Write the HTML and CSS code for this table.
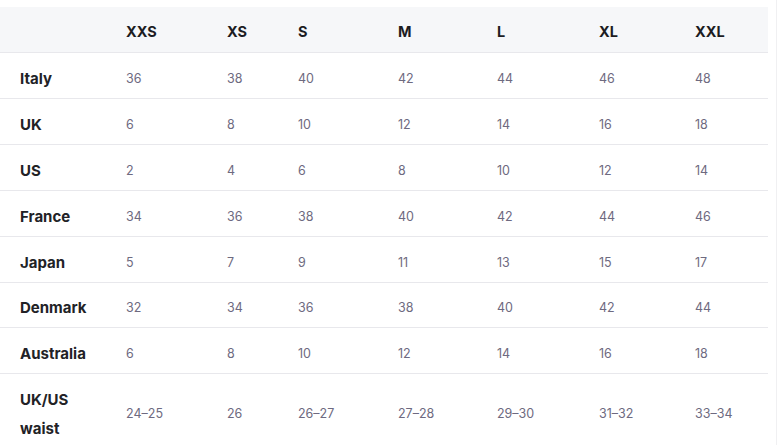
FILE: index.html
```html
<!DOCTYPE html>
<html>
<head>
<meta charset="utf-8">
<link rel="stylesheet" href="styles.css">
</head>
<body>
<div class="page">
  <div class="table">
    <div class="row head">
      <div class="cell"></div>
      <div class="cell">XXS</div>
      <div class="cell">XS</div>
      <div class="cell">S</div>
      <div class="cell">M</div>
      <div class="cell">L</div>
      <div class="cell">XL</div>
      <div class="cell">XXL</div>
    </div>
    <div class="row">
      <div class="cell label">Italy</div>
      <div class="cell">36</div><div class="cell">38</div><div class="cell">40</div><div class="cell">42</div><div class="cell">44</div><div class="cell">46</div><div class="cell">48</div>
    </div>
    <div class="row">
      <div class="cell label">UK</div>
      <div class="cell">6</div><div class="cell">8</div><div class="cell">10</div><div class="cell">12</div><div class="cell">14</div><div class="cell">16</div><div class="cell">18</div>
    </div>
    <div class="row">
      <div class="cell label">US</div>
      <div class="cell">2</div><div class="cell">4</div><div class="cell">6</div><div class="cell">8</div><div class="cell">10</div><div class="cell">12</div><div class="cell">14</div>
    </div>
    <div class="row">
      <div class="cell label">France</div>
      <div class="cell">34</div><div class="cell">36</div><div class="cell">38</div><div class="cell">40</div><div class="cell">42</div><div class="cell">44</div><div class="cell">46</div>
    </div>
    <div class="row">
      <div class="cell label">Japan</div>
      <div class="cell">5</div><div class="cell">7</div><div class="cell">9</div><div class="cell">11</div><div class="cell">13</div><div class="cell">15</div><div class="cell">17</div>
    </div>
    <div class="row">
      <div class="cell label">Denmark</div>
      <div class="cell">32</div><div class="cell">34</div><div class="cell">36</div><div class="cell">38</div><div class="cell">40</div><div class="cell">42</div><div class="cell">44</div>
    </div>
    <div class="row">
      <div class="cell label">Australia</div>
      <div class="cell">6</div><div class="cell">8</div><div class="cell">10</div><div class="cell">12</div><div class="cell">14</div><div class="cell">16</div><div class="cell">18</div>
    </div>
    <div class="row last">
      <div class="cell label">UK/US<br>waist</div>
      <div class="cell">24–25</div><div class="cell">26</div><div class="cell">26–27</div><div class="cell">27–28</div><div class="cell">29–30</div><div class="cell">31–32</div><div class="cell">33–34</div>
    </div>
  </div>
</div>
</body>
</html>
```
FILE: styles.css
```css
html, body {
  margin: 0;
  padding: 0;
  background: #fff;
}
.page {
  width: 776px;
  height: 438px;
  border-right: 1px solid #f0f0f2;
  padding-top: 7px;
  overflow: hidden;
}
.table {
  width: 768px;
  font-family: "Inter", "Liberation Sans", sans-serif;
}
.row {
  display: grid;
  grid-template-columns: 106px 101px 71px 100px 99px 102px 96px 93px;
  height: 46px;
  border-bottom: 1px solid #e8e8ec;
  box-sizing: border-box;
  align-items: center;
}
.row:nth-child(7) {
  height: 45px;
}
.row.head {
  background: #f6f7f9;
  height: 46px;
}
.cell {
  padding-left: 20px;
  font-size: 12.5px;
  color: #6e6a80;
  padding-top: 5px;
}
.head .cell {
  font-weight: 700;
  font-size: 14.5px;
  color: #1c1c22;
  padding-top: 3px;
}
.cell.label {
  font-weight: 700;
  font-size: 15px;
  color: #222226;
}
.row.last {
  height: 80px;
  border-bottom: none;
  align-items: start;
}
.row.last .cell {
  padding-top: 32px;
}
.row.last .label {
  line-height: 29px;
  padding-top: 11px;
}
```
